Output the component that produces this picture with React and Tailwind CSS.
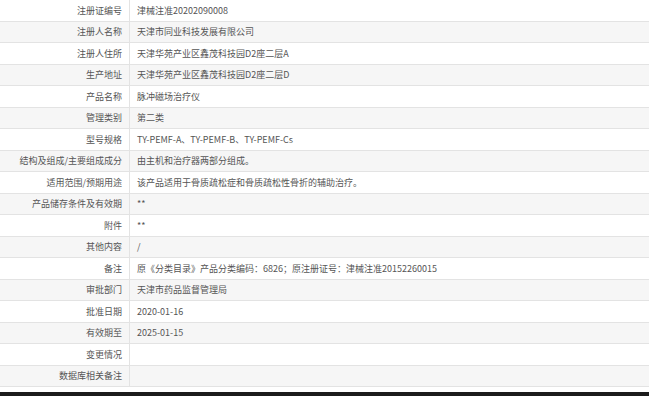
const rows = [
  ['注册证编号', '津械注准20202090008'],
  ['注册人名称', '天津市同业科技发展有限公司'],
  ['注册人住所', '天津华苑产业区鑫茂科技园D2座二层A'],
  ['生产地址', '天津华苑产业区鑫茂科技园D2座二层D'],
  ['产品名称', '脉冲磁场治疗仪'],
  ['管理类别', '第二类'],
  ['型号规格', 'TY-PEMF-A、TY-PEMF-B、TY-PEMF-Cs'],
  ['结构及组成/主要组成成分', '由主机和治疗器两部分组成。'],
  ['适用范围/预期用途', '该产品适用于骨质疏松症和骨质疏松性骨折的辅助治疗。'],
  ['产品储存条件及有效期', '**'],
  ['附件', '**'],
  ['其他内容', '/'],
  ['备注', '原《分类目录》产品分类编码：6826；原注册证号：津械注准20152260015'],
  ['审批部门', '天津市药品监督管理局'],
  ['批准日期', '2020-01-16'],
  ['有效期至', '2025-01-15'],
  ['变更情况', ''],
  ['数据库相关备注', ''],
];

export default function App() {
  return (
    <div
      className="w-[649px] h-[396px] bg-white overflow-hidden flex flex-col text-[9px] text-[#555]"
      style={{ fontFamily: '"Noto Sans CJK SC", "Noto Sans", sans-serif' }}
    >
      <div className="flex flex-col">
        {rows.map(([label, value], i) => (
          <div
            key={label}
            className={`flex h-[21.5px] border-b border-[#e3e3e3] ${i % 2 ? 'bg-[#f6f6f6]' : 'bg-white'}`}
          >
            <div className="w-[130px] shrink-0 border-r border-[#e3e3e3] pr-[7px] flex items-center justify-end leading-none whitespace-nowrap">
              {label}
            </div>
            <div className="flex-1 pl-[7px] flex items-center leading-none whitespace-nowrap">
              {value}
            </div>
          </div>
        ))}
      </div>
      <div className="mt-[5px] flex-1 bg-[#1c1c1c]" />
    </div>
  );
}
